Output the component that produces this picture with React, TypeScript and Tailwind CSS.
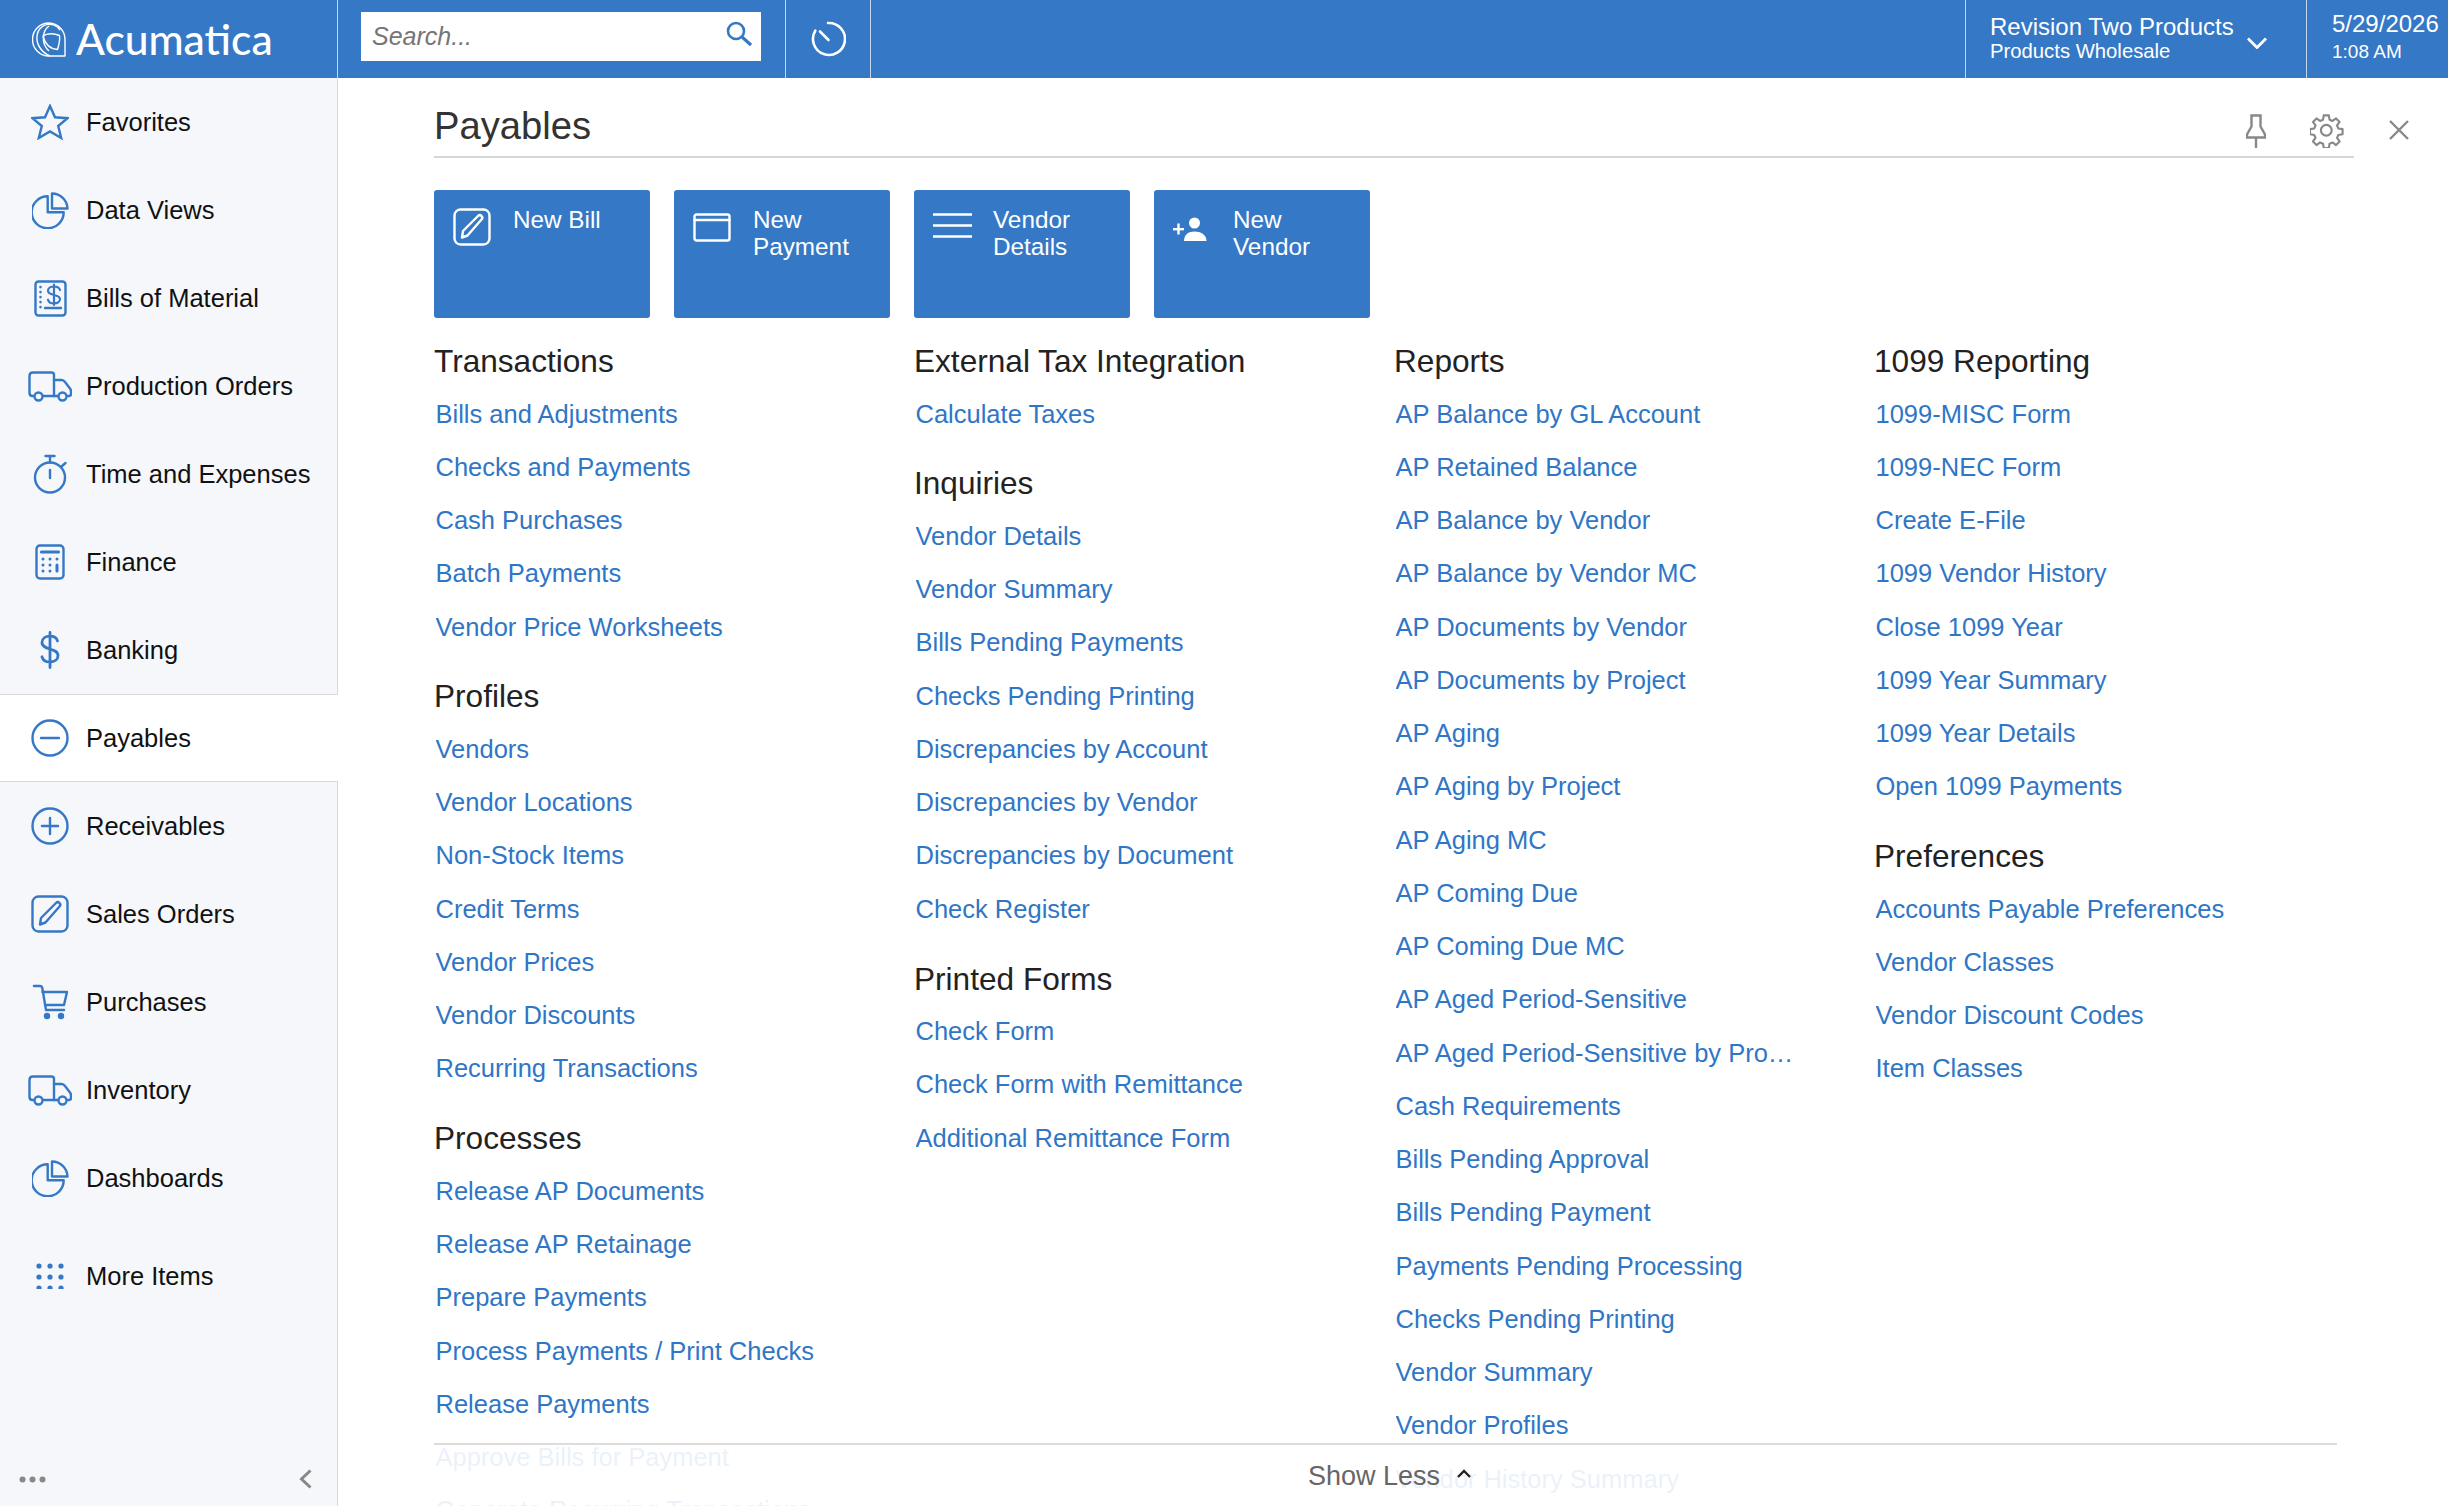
import type { ReactNode } from 'react';

const blue = '#3578c6';

function Glyph({ w, h, box, color = blue, sw = 2.4, children }: { w: number; h: number; box?: string; color?: string; sw?: number; children: ReactNode }) {
  return (
    <svg width={w} height={h} viewBox={box ?? `0 0 ${w} ${h}`} fill="none" stroke={color} strokeWidth={sw} strokeLinecap="round" strokeLinejoin="round">
      {children}
    </svg>
  );
}

const StarIcon = () => (
  <Glyph w={38} h={36}>
    <path d="M19 2l5 11.300 12.500.9-9.300 7.800 3 12L19 27.500 7.800 34l3-12-9.300-7.800 12.500-.9z" strokeLinejoin="miter" />
  </Glyph>
);
const PieIcon = () => (
  <Glyph w={37} h={37}>
    <path d="M15.700 4.300A16 16 0 1 0 31.700 20.300H15.700z" />
    <path d="M20 1.500A15.500 15.500 0 0 1 35.500 16.500H20z" />
  </Glyph>
);
const BillIcon = () => (
  <Glyph w={33} h={37}>
    <rect x="1.500" y="1.500" width="30" height="34" rx="3" />
    <path d="M26 10c-.6-2-3-3.500-6-3.500-3.400 0-6 1.700-6 4.300 0 5.500 12 3 12 8.300 0 2.600-2.600 4.300-6 4.300-3 0-5.400-1.500-6-3.700M20 4.500v20.500" strokeWidth="2.200" />
    <path d="M11 28h16" />
    <path d="M6.500 7v.1M6.500 12v.1M6.500 17v.1M6.500 22v.1M6.500 27v.1" strokeWidth="2.600" />
  </Glyph>
);
const TruckIcon = () => (
  <Glyph w={44} h={31}>
    <path d="M6 25H4.500C2.800 25 1.500 23.700 1.500 22V5c0-2 1.500-3.500 3.500-3.500h18.500c1.500 0 2.500 1 2.500 2.500v21H15" />
    <path d="M26 9h7.500c1.500 0 2.500.5 3.500 2l5 6.500c.7 1 1 1.800 1 3V23c0 1.300-1 2-2 2h-1" />
    <path d="M26 25h4" />
    <circle cx="10.500" cy="25.500" r="4" />
    <circle cx="34.500" cy="25.500" r="4" />
  </Glyph>
);
const TimerIcon = () => (
  <Glyph w={34} h={40}>
    <circle cx="17" cy="23.500" r="15" />
    <path d="M12.500 2h9M17 2v6.500M17 16v8M28.500 12.500l4-3.500" />
  </Glyph>
);
const CalcIcon = () => (
  <Glyph w={30} h={36}>
    <rect x="1.500" y="1.500" width="27" height="33" rx="3.500" />
    <path d="M6.500 8h17" strokeWidth="3.200" />
    <path d="M8 15v.1M15 15v.1M22 15v.1M8 21v.1M15 21v.1M22 21v.1M8 27v.1M15 27v.1M22 21v6" strokeWidth="3" />
  </Glyph>
);
const DollarIcon = () => (
  <Glyph w={20} h={38} sw={2.800}>
    <path d="M17.500 10c-.8-3-3.800-4.800-7.500-4.800-4.500 0-8 2.300-8 6.300 0 8 16 5 16 13 0 4-3.500 6.500-8 6.500-4 0-7.200-2-8-5.200M10 1.500v35" />
  </Glyph>
);
const MinusIcon = () => (
  <Glyph w={38} h={38}>
    <circle cx="19" cy="19" r="17.500" />
    <path d="M10 19h18" />
  </Glyph>
);
const PlusIcon = () => (
  <Glyph w={38} h={38}>
    <circle cx="19" cy="19" r="17.500" />
    <path d="M11 19h16M19 11v16" />
  </Glyph>
);
const EditIcon = ({ color = blue }: { color?: string }) => (
  <Glyph w={38} h={38} color={color}>
    <rect x="1.500" y="1.500" width="35" height="35" rx="6" />
    <path d="M9 29.500l1-6.500L25 8c1-1 2.500-1 3.500 0s1 2.500 0 3.500L14.500 27.500z" />
  </Glyph>
);
const CartIcon = () => (
  <Glyph w={37} h={36}>
    <path d="M2 2h6c1.200 0 2 .7 2.300 2l3.700 22h18" />
    <path d="M10.500 8H35l-3 13H13" />
    <circle cx="15" cy="32" r="2" fill={blue} />
    <circle cx="29" cy="32" r="2" fill={blue} />
  </Glyph>
);
const DotsIcon = () => (
  <svg width="28" height="26" viewBox="0 0 28 26" fill={blue}>
    {[3, 14, 25].flatMap((y) =>
      [3, 14, 25].map((x) => <circle key={`${x}-${y}`} cx={x} cy={y} r="2.600" />),
    )}
  </svg>
);

const sideItems: { label: string; icon: ReactNode }[] = [
  { label: 'Favorites', icon: <StarIcon /> },
  { label: 'Data Views', icon: <PieIcon /> },
  { label: 'Bills of Material', icon: <BillIcon /> },
  { label: 'Production Orders', icon: <TruckIcon /> },
  { label: 'Time and Expenses', icon: <TimerIcon /> },
  { label: 'Finance', icon: <CalcIcon /> },
  { label: 'Banking', icon: <DollarIcon /> },
  { label: 'Payables', icon: <MinusIcon /> },
  { label: 'Receivables', icon: <PlusIcon /> },
  { label: 'Sales Orders', icon: <EditIcon /> },
  { label: 'Purchases', icon: <CartIcon /> },
  { label: 'Inventory', icon: <TruckIcon /> },
  { label: 'Dashboards', icon: <PieIcon /> },
];

const columns: { title: string; links: string[] }[][] = [
  [
    { title: 'Transactions', links: ['Bills and Adjustments', 'Checks and Payments', 'Cash Purchases', 'Batch Payments', 'Vendor Price Worksheets'] },
    { title: 'Profiles', links: ['Vendors', 'Vendor Locations', 'Non-Stock Items', 'Credit Terms', 'Vendor Prices', 'Vendor Discounts', 'Recurring Transactions'] },
    { title: 'Processes', links: ['Release AP Documents', 'Release AP Retainage', 'Prepare Payments', 'Process Payments / Print Checks', 'Release Payments', 'Approve Bills for Payment', 'Generate Recurring Transactions'] },
  ],
  [
    { title: 'External Tax Integration', links: ['Calculate Taxes'] },
    { title: 'Inquiries', links: ['Vendor Details', 'Vendor Summary', 'Bills Pending Payments', 'Checks Pending Printing', 'Discrepancies by Account', 'Discrepancies by Vendor', 'Discrepancies by Document', 'Check Register'] },
    { title: 'Printed Forms', links: ['Check Form', 'Check Form with Remittance', 'Additional Remittance Form'] },
  ],
  [
    {
      title: 'Reports',
      links: ['AP Balance by GL Account', 'AP Retained Balance', 'AP Balance by Vendor', 'AP Balance by Vendor MC', 'AP Documents by Vendor', 'AP Documents by Project', 'AP Aging', 'AP Aging by Project', 'AP Aging MC', 'AP Coming Due', 'AP Coming Due MC', 'AP Aged Period-Sensitive', 'AP Aged Period-Sensitive by Project', 'Cash Requirements', 'Bills Pending Approval', 'Bills Pending Payment', 'Payments Pending Processing', 'Checks Pending Printing', 'Vendor Summary', 'Vendor Profiles', 'Vendor History Summary'],
    },
  ],
  [
    { title: '1099 Reporting', links: ['1099-MISC Form', '1099-NEC Form', 'Create E-File', '1099 Vendor History', 'Close 1099 Year', '1099 Year Summary', '1099 Year Details', 'Open 1099 Payments'] },
    { title: 'Preferences', links: ['Accounts Payable Preferences', 'Vendor Classes', 'Vendor Discount Codes', 'Item Classes'] },
  ],
];

const tiles: { lines: string[]; icon: ReactNode }[] = [
  {
    lines: ['New Bill'],
    icon: (
      <div className="mt-[2px]">
        <EditIcon color="#fff" />
      </div>
    ),
  },
  {
    lines: ['New', 'Payment'],
    icon: (
      <div className="mt-[7px]">
        <Glyph w={38} h={29} color="#fff">
          <rect x="1.500" y="1.500" width="35" height="26" rx="2" />
          <path d="M1.500 7h35" />
        </Glyph>
      </div>
    ),
  },
  {
    lines: ['Vendor', 'Details'],
    icon: (
      <div className="mt-[7px]">
        <svg width="39" height="25" viewBox="0 0 39 25" stroke="#fff" strokeWidth="2.600">
          <path d="M0 1.500h39M0 12.500h39M0 23.500h39" />
        </svg>
      </div>
    ),
  },
  {
    lines: ['New', 'Vendor'],
    icon: (
      <div className="mt-[11px]">
        <svg width="34" height="24" viewBox="0 0 34 24" fill="#fff">
          <circle cx="21.500" cy="6" r="5.500" />
          <path d="M11 24c0-6.500 4.500-9.500 10.500-9.500S33.500 17.500 33.500 24z" />
          <path d="M0 11h11v2.400H0z" />
          <path d="M4.300 6.500h2.400v11H4.300z" />
        </svg>
      </div>
    ),
  },
];

function TopBar() {
  return (
    <header className="flex h-[78px] shrink-0 bg-[#3578c6] text-white">
      <div className="flex w-[338px] shrink-0 items-center border-r border-white/70 pl-[32px]">
        <svg width="34" height="35" viewBox="0 0 34 35" fill="none" stroke="#fff" strokeWidth="1.400" strokeLinejoin="round">
          <path d="M17 1A16.500 16.500 0 0 0 17 34H33V17.500A16.500 16.500 0 0 0 17 1z" />
          <path d="M28 8A12.500 12.500 0 0 0 5 14c-1 8 4 16 13 20" />
          <path d="M11 14C15 11 22 11 27.500 13.500 28 18 27 23 25.500 27.500 18.500 27 13 22 11 14z" />
          <path d="M17 4C10 9 9 22 17 29" />
        </svg>
        <span className="ml-[10px] font-['Lato',sans-serif] text-[42.500px] font-medium leading-none">Acumatica</span>
      </div>
      <div className="flex w-[448px] shrink-0 items-start border-r border-white/70 pl-[23px] pt-[12px]">
        <div className="flex h-[49px] w-[400px] items-center justify-between bg-white pl-[11px] pr-[9px]">
          <span className="text-[25px] italic text-[#757575]">Search...</span>
          <svg className="mb-[6px]" width="26" height="25" viewBox="0 0 26 25" fill="none" stroke={blue} strokeWidth="2.600">
            <circle cx="10" cy="10" r="8" />
            <path d="M16 16l9 8" strokeWidth="3.200" />
          </svg>
        </div>
      </div>
      <div className="flex w-[85px] shrink-0 items-center justify-center border-r border-white/70">
        <svg width="36" height="36" viewBox="0 0 36 36" fill="none" stroke="#fff" strokeWidth="2.600" strokeLinecap="round">
          <path d="M18 2A16 16 0 1 1 5.300 9.700" />
          <path d="M10 10.500l8.500 8.500" />
        </svg>
      </div>
      <div className="flex-1" />
      <div className="flex w-[342px] shrink-0 items-center border-l border-r border-white/70 pl-[24px] pb-[3px]">
        <div className="w-[244px]">
          <div className="whitespace-nowrap text-[24px] leading-[27px]">Revision Two Products</div>
          <div className="whitespace-nowrap text-[20.300px] leading-[23px]">Products Wholesale</div>
        </div>
        <svg className="ml-[13px] mt-[10px]" width="20" height="12" viewBox="0 0 20 12" fill="none" stroke="#fff" strokeWidth="2.800">
          <path d="M1 1.500l9 9 9-9" />
        </svg>
      </div>
      <div className="w-[141px] shrink-0 pl-[25px] pt-[10px]">
        <div className="whitespace-nowrap text-[24px] leading-[27px]">5/29/2026</div>
        <div className="mt-[3px] whitespace-nowrap text-[19px] leading-[23px]">1:08 AM</div>
      </div>
    </header>
  );
}

function SideBar() {
  return (
    <aside className="flex w-[338px] shrink-0 flex-col border-r border-[#d9d9d9] bg-[#f5f7fa]">
      {sideItems.map((item) => {
        const active = item.label === 'Payables';
        return (
          <a
            key={item.label}
            className={`flex h-[88px] shrink-0 items-center ${active ? '-mr-px border-y border-[#d9d9d9] bg-white' : ''}`}
          >
            <span className="flex w-[86px] shrink-0 justify-center pl-[14px]">{item.icon}</span>
            <span className="whitespace-nowrap text-[25.500px] text-[#111]">{item.label}</span>
          </a>
        );
      })}
      <a className="mt-[10px] flex h-[88px] shrink-0 items-center">
        <span className="flex w-[86px] shrink-0 justify-center pl-[14px]"><DotsIcon /></span>
        <span className="whitespace-nowrap text-[25.500px] text-[#111]">More Items</span>
      </a>
      <div className="mt-auto flex h-[54px] items-center justify-between pl-[19px] pr-[25px]">
        <svg width="27" height="7" viewBox="0 0 27 7" fill="#888">
          <circle cx="3.500" cy="3.500" r="3" />
          <circle cx="13.500" cy="3.500" r="3" />
          <circle cx="23.500" cy="3.500" r="3" />
        </svg>
        <svg width="13" height="20" viewBox="0 0 13 20" fill="none" stroke="#888" strokeWidth="3">
          <path d="M11.500 1.500L2.500 10l9 8.500" />
        </svg>
      </div>
    </aside>
  );
}

function LinkGroup({ title, links }: { title: string; links: string[] }) {
  return (
    <section className="mb-[22.700px]">
      <h2 className="mb-[6.500px] h-[40px] whitespace-nowrap text-[31.600px] leading-[40px] text-[#222]">{title}</h2>
      {links.map((link) => (
        <a key={link} className="ml-[1.500px] block h-[53.250px] max-w-[400px] truncate text-[25.500px] leading-[53.250px] text-[#2f76c6]">
          {link}
        </a>
      ))}
    </section>
  );
}

export default function App() {
  return (
    <div className="flex h-[1506px] w-[2448px] flex-col overflow-hidden bg-white font-['Liberation_Sans',Arial,sans-serif]">
      <TopBar />
      <div className="flex min-h-0 flex-1">
        <SideBar />
        <main className="relative min-w-0 flex-1 overflow-hidden pl-[96px]">
          <div className="flex h-[80px] items-start">
            <div className="flex h-[80px] w-[1920px] items-start justify-between border-b-2 border-[#d6d6d6] pr-[10px]">
              <h1 className="pt-[26px] text-[38.200px] leading-[44px] text-[#333]">Payables</h1>
              <div className="flex items-start gap-[44px] pt-[36px]">
                <svg width="20" height="34" viewBox="0 0 20 34" fill="none" stroke="#888" strokeWidth="2.400">
                  <path d="M5.500 1.500h9v11l4.500 8v3H1v-3l4.500-8zM10 23.500V34" />
                </svg>
                <svg width="34" height="34" viewBox="0 0 24 24" fill="none" stroke="#888" strokeWidth="1.500" strokeLinejoin="round">
                  <path d="M10.200 1.500h3.600l.5 3 2.100.9 2.500-1.800 2.500 2.500-1.800 2.500.9 2.100 3 .5v3.600l-3 .5-.9 2.100 1.800 2.500-2.500 2.500-2.500-1.800-2.100.9-.5 3h-3.600l-.5-3-2.100-.9-2.500 1.800-2.500-2.500 1.800-2.500-.9-2.100-3-.5v-3.600l3-.5.9-2.100-1.800-2.500 2.500-2.500 2.500 1.800 2.100-.9z" transform="translate(-.5 -.5)" />
                  <circle cx="11.500" cy="11.500" r="3.800" />
                </svg>
              </div>
            </div>
            <div className="pl-[35px] pt-[42px]">
              <svg width="20" height="20" viewBox="0 0 20 20" stroke="#888" strokeWidth="2.400">
                <path d="M1 1l18 18M19 1L1 19" />
              </svg>
            </div>
          </div>
          <div className="mt-[32px] flex gap-[24px]">
            {tiles.map((tile) => (
              <a key={tile.lines[0] + tile.lines[1]} className="flex h-[128px] w-[216px] gap-[16px] rounded-[3px] bg-[#3578c6] pl-[19px] pt-[16px] text-white">
                <span className="flex w-[44px] shrink-0 items-start">{tile.icon}</span>
                <span className="text-[24.300px] leading-[27px]">
                  {tile.lines.map((line) => (
                    <span key={line} className="block whitespace-nowrap">{line}</span>
                  ))}
                </span>
              </a>
            ))}
          </div>
          <div className="mt-[23px] flex">
            {columns.map((groups, i) => (
              <div key={i} className="w-[480px] shrink-0">
                {groups.map((group) => (
                  <LinkGroup key={group.title} title={group.title} links={group.links} />
                ))}
              </div>
            ))}
          </div>
          <div className="absolute bottom-0 left-[96px] h-[63px] w-[1903px] border-t-2 border-[#dcdcdc] bg-white/90">
            <div className="flex h-full items-center pl-[874px] pt-[2px]">
              <span className="text-[27px] text-[#666]">Show Less</span>
              <svg className="mb-[6px] ml-[17px]" width="14" height="9" viewBox="0 0 14 9" fill="none" stroke="#222" strokeWidth="2.400">
                <path d="M1 8l6-6 6 6" />
              </svg>
            </div>
          </div>
        </main>
      </div>
    </div>
  );
}
